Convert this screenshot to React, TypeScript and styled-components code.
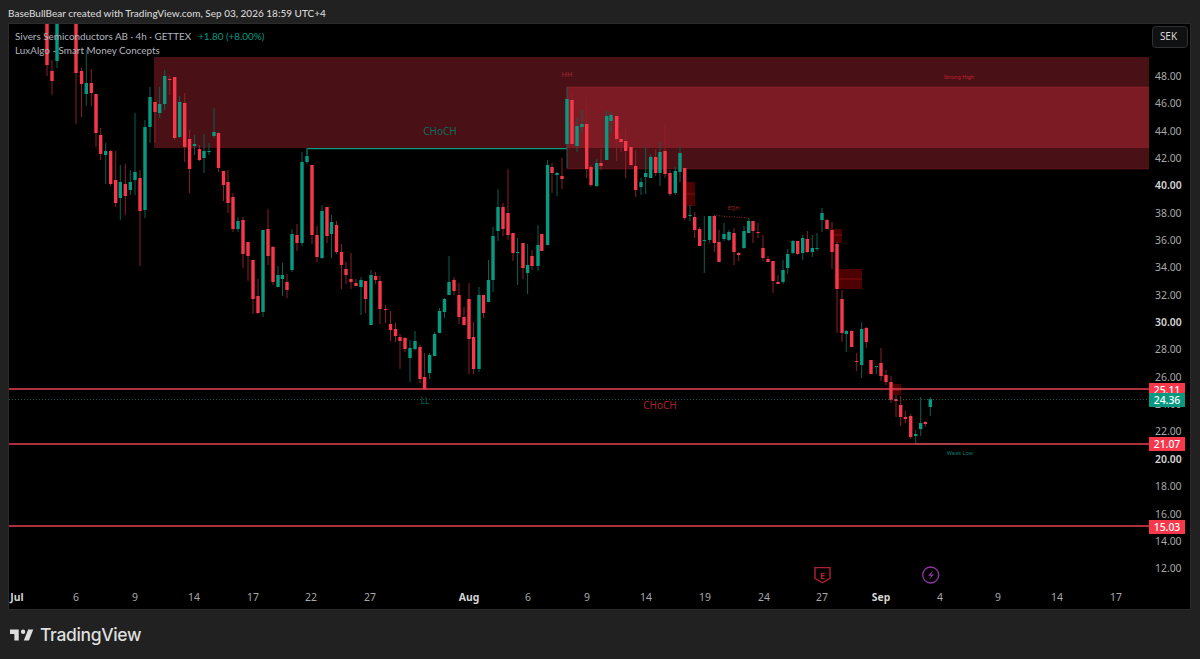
import React from 'react';
import styled, { createGlobalStyle } from 'styled-components';

const Global = createGlobalStyle`
  html, body { margin: 0; padding: 0; background: #212121; }
  #root { width: 1200px; height: 659px; overflow: hidden; }
  * { box-sizing: border-box; }
`;

const FONT = `"Noto Sans", "Liberation Sans", sans-serif`;
const TEXT_FONT = `Lato, "Noto Sans", sans-serif`;
const RED = '#f7374a';
const GREEN = '#089981';
const RED_WICK = '#8c1f2c';
const GREEN_WICK = '#0a5f52';

const Page = styled.div`
  width: 1200px;
  height: 659px;
  display: flex;
  flex-direction: column;
  background: #212121;
  font-family: ${FONT};
`;
const TitleBar = styled.div`
  height: 23px;
  padding: 5px 0 0 8px;
  color: #d6d6d6;
  font-family: ${TEXT_FONT};
  font-size: 10px;
  font-weight: 500;
  line-height: 16px;
  white-space: nowrap;
`;
const Panel = styled.div`
  width: 1183px;
  height: 587px;
  margin-left: 8px;
  background: #000;
  border: 1px solid #2b2b2b;
  display: grid;
  grid-template-columns: 1140px 1fr;
  grid-template-rows: 562px 1fr;
  position: relative;
  overflow: hidden;
`;
const Plot = styled.div`
  position: relative;
  overflow: hidden;
  background: #000;
`;
const ChartSvg = styled.svg`
  display: block;
  width: 1140px;
  height: 562px;
`;
const Legend = styled.div`
  position: absolute;
  left: 6px;
  top: 5px;
  display: flex;
  flex-direction: column;
  font-family: ${TEXT_FONT};
  font-size: 9.9px;
  line-height: 14px;
  color: #b2b5be;
`;
const LegendRow = styled.div`
  display: flex;
  gap: 7px;
  white-space: nowrap;
`;
const Change = styled.span`
  color: #089981;
`;
const PriceAxis = styled.div`
  position: relative;
  display: flex;
  flex-direction: column;
  padding: 2px 0 0 3px;
`;
const CurrencyButton = styled.div`
  width: 36px;
  height: 22px;
  margin-bottom: 15px;
  flex: none;
  border: 1px solid #2f3133;
  border-radius: 4px;
  background: #101112;
  color: #d8d8d8;
  font-size: 10px;
  line-height: 19px;
  text-align: center;
  padding-right: 3px;
`;
const PriceLabel = styled.div<{ $major: boolean }>`
  height: 27.35px;
  flex: none;
  line-height: 27.35px;
  padding-left: 3px;
  font-size: 10.4px;
  color: ${p => (p.$major ? '#d4d4d4' : '#a8a8a8')};
  font-weight: ${p => (p.$major ? 600 : 400)};
`;
const PriceTag = styled.div<{ $top: number; $bg: string; $h: number }>`
  position: absolute;
  left: 0;
  top: ${p => p.$top}px;
  width: 36px;
  height: ${p => p.$h}px;
  background: ${p => p.$bg};
  color: #fff;
  font-size: 10.4px;
  font-weight: 500;
  line-height: ${p => p.$h}px;
  text-align: center;
`;
const TimeAxis = styled.div`
  grid-column: 1 / 3;
  display: flex;
  align-items: center;
  padding-bottom: 1px;
`;
const TimeTick = styled.div<{ $gap: number; $major?: boolean }>`
  flex: none;
  width: 0;
  margin-left: ${p => p.$gap}px;
  display: flex;
  justify-content: center;
  white-space: nowrap;
  font-size: 10.4px;
  color: ${p => (p.$major ? '#d4d4d4' : '#a8a8a8')};
  font-weight: ${p => (p.$major ? 700 : 400)};
`;
const Footer = styled.div`
  flex: 1;
  display: flex;
  align-items: center;
  gap: 6px;
  padding: 0 0 0 10px;
`;
const LogoText = styled.span`
  font-family: Inter, "Noto Sans", sans-serif;
  font-size: 17.5px;
  font-weight: 500;
  letter-spacing: -0.35px;
  color: #dedede;
`;

type C = [number, number, number, number, number, 'r' | 'g'];
const candles: C[] = [
  [47, 10, 10, 65, 76, 'r'], [52, 60, 71, 81, 95, 'r'], [57, 10, 10, 61, 68, 'g'],
  [76, 10, 10, 73, 124, 'r'], [81.6, 68, 71, 84, 117, 'r'], [86.3, 50, 83, 94, 106, 'g'],
  [91.3, 69, 83, 93, 106, 'r'], [96, 94, 94, 133, 147, 'r'], [100.7, 128, 135, 154, 160, 'r'],
  [105.7, 143, 151, 155, 184, 'g'], [110.7, 150, 151, 184, 186, 'r'], [115.7, 151, 180, 203, 207, 'r'],
  [120.3, 165, 182, 198, 220, 'g'], [125.3, 164, 184, 196, 215, 'r'], [130.3, 170, 182, 190, 195, 'g'],
  [135, 113, 172, 180, 195, 'g'], [140, 170, 178, 211, 266, 'r'], [145, 120, 127, 210, 218, 'g'],
  [150, 87, 97, 127, 143, 'g'], [155, 102, 102, 112, 143, 'r'], [159.7, 87, 104, 113, 118, 'g'],
  [164.7, 70, 76, 104, 110, 'g'], [169.7, 76, 79, 80, 95, 'r'], [174.7, 77, 77, 138, 140, 'r'],
  [179.7, 96, 102, 137, 138, 'g'], [184.7, 93, 103, 147, 162, 'r'], [189.6, 130, 139, 169, 193, 'r'],
  [194.5, 135, 144, 146, 155, 'g'], [199.5, 145, 149, 160, 161, 'r'], [204, 134, 151, 158, 173, 'g'],
  [209, 143, 151, 152, 155, 'g'], [214, 108, 132, 136, 138, 'g'], [218.5, 132, 133, 168, 172, 'r'],
  [223.5, 171, 171, 185, 201, 'r'], [228, 170, 182, 203, 213, 'r'], [233, 193, 197, 229, 232, 'r'],
  [238, 217, 221, 229, 232, 'g'], [243, 217, 220, 254, 268, 'r'], [248, 242, 242, 256, 281, 'r'],
  [253, 260, 260, 299, 314, 'r'], [258, 279, 296, 313, 314, 'r'], [263, 230, 230, 312, 317, 'g'],
  [268, 209, 229, 256, 265, 'r'], [273, 246, 247, 282, 285, 'r'], [278, 266, 275, 287, 287, 'g'],
  [282.5, 263, 275, 279, 296, 'g'], [287, 274, 282, 290, 298, 'r'], [292, 229, 234, 270, 272, 'g'],
  [297, 224, 235, 243, 251, 'r'], [302, 152, 162, 243, 246, 'g'], [307, 148, 156, 162, 164, 'g'],
  [312, 165, 165, 235, 244, 'r'], [317, 226, 235, 257, 262, 'r'], [322, 205, 211, 258, 259, 'g'],
  [327, 207, 207, 236, 243, 'r'], [331.5, 215, 222, 234, 258, 'g'], [336.5, 221, 225, 252, 254, 'r'],
  [341.5, 244, 252, 265, 289, 'r'], [346, 262, 269, 275, 284, 'r'], [351, 253, 279, 282, 289, 'r'],
  [356, 279, 283, 286, 286, 'r'], [361, 277, 280, 287, 315, 'g'], [365.6, 281, 281, 299, 313, 'r'],
  [371, 270, 275, 325, 325, 'g'], [375.6, 272, 276, 280, 284, 'r'], [380, 276, 281, 309, 324, 'r'],
  [385.6, 305, 309, 310, 323, 'r'], [390.5, 311, 324, 330, 341, 'r'], [395.5, 323, 329, 336, 342, 'r'],
  [400, 334, 337, 341, 369, 'r'], [405, 337, 338, 349, 352, 'r'], [410, 340, 348, 358, 382, 'g'],
  [415, 331, 341, 349, 350, 'g'], [420, 345, 347, 379, 383, 'r'], [424.6, 353, 377, 389, 390, 'r'],
  [429.6, 353, 355, 373, 379, 'g'], [434.6, 332, 334, 356, 356, 'g'], [439.5, 308, 311, 333, 333, 'g'],
  [444.5, 298, 299, 312, 318, 'g'], [449, 256, 282, 295, 295, 'g'], [454, 277, 280, 291, 295, 'r'],
  [459, 283, 295, 317, 324, 'r'], [464, 307, 317, 325, 325, 'r'], [469, 283, 299, 339, 374, 'r'],
  [473.6, 322, 337, 369, 374, 'r'], [479, 287, 295, 369, 372, 'g'], [483.5, 295, 295, 313, 318, 'r'],
  [488.5, 260, 280, 302, 302, 'g'], [493, 227, 236, 280, 292, 'g'], [498, 189, 207, 231, 241, 'g'],
  [503, 203, 207, 229, 236, 'r'], [508, 169, 213, 235, 240, 'r'], [513, 233, 233, 253, 261, 'r'],
  [517.6, 238, 252, 253, 285, 'g'], [523, 243, 243, 268, 279, 'r'], [527.6, 244, 265, 273, 294, 'g'],
  [532, 250, 256, 266, 270, 'r'], [538, 225, 245, 266, 271, 'g'], [541.8, 234, 234, 251, 251, 'r'],
  [547.6, 160, 165, 245, 245, 'g'], [552, 163, 167, 173, 193, 'r'], [557, 172, 173, 175, 196, 'g'],
  [562, 158, 176, 179, 189, 'r'], [567, 87, 99, 144, 168, 'g'], [572, 92, 100, 144, 144, 'r'],
  [577, 118, 126, 146, 152, 'g'], [582, 110, 124, 127, 133, 'g'], [586.7, 98, 124, 169, 178, 'r'],
  [591, 165, 167, 185, 187, 'r'], [596.7, 159, 163, 186, 187, 'g'], [601, 149, 163, 166, 170, 'r'],
  [606.7, 111, 116, 160, 160, 'g'], [611, 112, 115, 121, 133, 'g'], [616.7, 116, 116, 139, 161, 'r'],
  [621, 133, 139, 142, 152, 'r'], [625.7, 127, 141, 151, 178, 'r'], [631, 147, 147, 165, 166, 'r'],
  [635.7, 150, 166, 190, 197, 'r'], [641, 178, 182, 187, 195, 'g'], [645.7, 147, 173, 177, 194, 'g'],
  [650.7, 154, 157, 178, 178, 'g'], [655.7, 149, 157, 173, 176, 'r'], [660, 142, 152, 173, 186, 'g'],
  [665, 123, 151, 174, 178, 'r'], [670, 170, 173, 194, 196, 'r'], [675.3, 167, 171, 193, 195, 'g'],
  [680, 147, 153, 172, 182, 'g'], [684.7, 168, 168, 218, 220, 'r'], [690, 205, 215, 216, 221, 'g'],
  [694.7, 212, 217, 230, 238, 'r'], [699.7, 227, 229, 246, 246, 'r'], [704.3, 216, 240, 241, 273, 'g'],
  [709.7, 216, 216, 240, 243, 'g'], [714.3, 216, 216, 243, 252, 'r'], [719, 230, 242, 262, 262, 'r'],
  [724, 223, 234, 239, 241, 'g'], [729, 230, 232, 240, 241, 'g'], [734, 228, 233, 252, 265, 'r'],
  [738.7, 252, 253, 255, 261, 'r'], [744, 226, 231, 248, 249, 'g'], [748.7, 218, 221, 233, 233, 'g'],
  [753, 221, 221, 231, 243, 'r'], [758, 223, 232, 233, 238, 'r'], [763, 235, 248, 258, 261, 'r'],
  [768, 256, 259, 262, 262, 'r'], [773, 261, 261, 281, 293, 'r'], [778, 275, 282, 284, 284, 'r'],
  [783, 260, 270, 282, 284, 'g'], [787.7, 249, 254, 268, 274, 'g'], [793, 240, 241, 253, 254, 'g'],
  [797.7, 241, 241, 254, 255, 'r'], [802.7, 235, 238, 253, 260, 'g'], [807.3, 231, 239, 252, 253, 'r'],
  [812.3, 235, 248, 252, 257, 'g'], [817, 233, 248, 249, 251, 'g'], [822, 208, 213, 220, 232, 'g'],
  [827, 219, 220, 229, 229, 'r'], [832, 222, 230, 252, 269, 'r'], [837, 242, 244, 289, 333, 'r'],
  [842, 290, 299, 333, 342, 'r'], [846.3, 330, 331, 334, 352, 'g'], [851.7, 330, 331, 347, 347, 'r'],
  [856.7, 353, 361, 362, 371, 'r'], [861.7, 322, 329, 365, 378, 'g'], [866.3, 327, 328, 342, 348, 'r'],
  [871, 360, 360, 374, 374, 'r'], [876.3, 366, 366, 367, 374, 'g'], [881, 348, 363, 376, 381, 'r'],
  [886, 370, 375, 382, 385, 'r'], [891, 376, 382, 400, 403, 'r'], [896, 395, 399, 401, 417, 'r'],
  [900.7, 396, 405, 417, 426, 'r'], [905.3, 411, 417, 419, 423, 'r'], [910.7, 414, 416, 437, 439, 'r'],
  [915.7, 430, 434, 436, 444, 'g'], [920.7, 397, 423, 429, 436, 'g'], [925.3, 421, 422, 424, 427, 'r'],
  [930.3, 397, 399, 407, 416, 'g'],
];

const prices = [48, 46, 44, 42, 40, 38, 36, 34, 32, 30, 28, 26, 24, 22, 20, 18, 16, 14, 12];
const ticks: { t: string; gap: number; major?: boolean }[] = [
  { t: 'Jul', gap: 8, major: true }, { t: '6', gap: 59 }, { t: '9', gap: 59 }, { t: '14', gap: 59 },
  { t: '17', gap: 59 }, { t: '22', gap: 58 }, { t: '27', gap: 59 }, { t: 'Aug', gap: 99, major: true },
  { t: '6', gap: 59 }, { t: '9', gap: 59 }, { t: '14', gap: 59 }, { t: '19', gap: 59 }, { t: '24', gap: 59 },
  { t: '27', gap: 58 }, { t: 'Sep', gap: 59, major: true }, { t: '4', gap: 59 }, { t: '9', gap: 58 },
  { t: '14', gap: 59 }, { t: '17', gap: 59 },
];

const Candle: React.FC<{ c: C }> = ({ c }) => {
  const [x, wt, bt, bb, wb, d] = c;
  return (
    <g>
      <line x1={x} x2={x} y1={wt} y2={wb} stroke={d === 'r' ? RED_WICK : GREEN_WICK} strokeWidth={1} />
      <rect x={x - 1.7} y={bt} width={3.4} height={Math.max(1, bb - bt)} fill={d === 'r' ? RED : GREEN} />
    </g>
  );
};

const OB: React.FC<{ x: number; y: number; w: number; h: number; mid: number }> = ({ x, y, w, h, mid }) => (
  <g>
    <rect x={x} y={y} width={w} height={h} fill="rgba(140,0,0,.55)" />
    <line x1={x} x2={x + w} y1={mid} y2={mid} stroke="rgba(200,30,30,.45)" strokeWidth={1} />
  </g>
);

const hLines = [389, 444, 526];

const Chart = () => (
  <ChartSvg viewBox="9 24 1140 562">
    <rect x={154.5} y={57.5} width={994} height={90} fill="rgba(242,54,69,.3)" stroke="rgba(242,54,69,.18)" />
    <rect x={567} y={87} width={581.5} height={82} fill="rgba(242,54,69,.3)" stroke="rgba(242,54,69,.2)" />
    <line x1={307} x2={567} y1={148.6} y2={148.6} stroke="#0a9a82" strokeWidth={1.4} />
    <line x1={307} x2={307} y1={148} y2={155} stroke="#0a8f79" strokeWidth={1} />
    <OB x={686.5} y={182} w={8.5} h={24} mid={194} />
    <OB x={833} y={229} w={9} h={14} mid={235} />
    <OB x={835} y={269} w={27} h={20} mid={279} />
    <OB x={893} y={384} w={8} h={11} mid={390} />
    {candles.map((c, i) => <Candle key={i} c={c} />)}
    <line x1={714} x2={749} y1={215.5} y2={218} stroke="#9c2431" strokeWidth={1} strokeDasharray="1 1.5" />
    <line x1={916} x2={960} y1={443.8} y2={443.8} stroke="#0a6f5f" strokeWidth={1} />
    <line x1={9} x2={1149} y1={399.5} y2={399.5} stroke="#0d5f52" strokeWidth={1} strokeDasharray="1 2" />
    {hLines.map(y => <line key={y} x1={9} x2={1149} y1={y} y2={y} stroke="#e6404f" strokeWidth={1.4} />)}
    <text x={440} y={135} textAnchor="middle" fontFamily={FONT} fontSize={10} fill="#0c6c5c">CHoCH</text>
    <text x={660} y={409} textAnchor="middle" fontFamily={FONT} fontSize={10} fill="#a8202f">CHoCH</text>
    <text x={567} y={77} textAnchor="middle" fontFamily={FONT} fontSize={7.4} fill="#a02a3a">HH</text>
    <text x={959} y={79} textAnchor="middle" fontFamily={FONT} fontSize={5.4} fill="#c42234">Strong High</text>
    <text x={733.5} y={210} textAnchor="middle" fontFamily={FONT} fontSize={5.6} fill="#a8202f">EQH</text>
    <text x={425} y={404} textAnchor="middle" fontFamily={FONT} fontSize={8} fill="#0c6c5c">LL</text>
    <text x={960} y={455} textAnchor="middle" fontFamily={FONT} fontSize={5.6} fill="#0c7c69">Weak Low</text>
    <path d="M815 567.6h15v10.8l-7.5 4.4-7.5-4.4z" fill="none" stroke="#b2202f" strokeWidth={1.4} />
    <text x={822.5} y={578.6} textAnchor="middle" fontFamily={FONT} fontSize={9.5} fontWeight={700} fill="#b2202f">E</text>
    <circle cx={930.7} cy={575} r={8} fill="none" stroke="#9436aa" strokeWidth={1.3} />
    <path d="M933 570.6l-5 5.2h3.2l-2 3.8 4.8-5.2h-3z" fill="#9436aa" />
  </ChartSvg>
);

const TvLogo = () => (
  <svg width="24" height="16" viewBox="2 5 33 17" aria-hidden="true">
    <path fill="#dedede" d="M14 6H2v6h6v9h6V6zm14 15h-7l6-15h7l-6 15zm-8-9a3 3 0 1 0 0-6 3 3 0 0 0 0 6z" />
  </svg>
);

export default function App() {
  return (
    <Page>
      <Global />
      <TitleBar>BaseBullBear created with TradingView.com, Sep 03, 2026 18:59 UTC+4</TitleBar>
      <Panel>
        <Plot>
          <Chart />
          <Legend>
            <LegendRow>
              <span>Sivers Semiconductors AB · 4h · GETTEX</span>
              <Change>+1.80 (+8.00%)</Change>
            </LegendRow>
            <LegendRow>LuxAlgo - Smart Money Concepts</LegendRow>
          </Legend>
        </Plot>
        <PriceAxis>
          <CurrencyButton>SEK</CurrencyButton>
          {prices.map(p => (
            <PriceLabel key={p} $major={p % 10 === 0}>{p.toFixed(2)}</PriceLabel>
          ))}
          <PriceTag $top={359} $bg="#f7374a" $h={14}>25.11</PriceTag>
          <PriceTag $top={369} $bg="#089981" $h={14}>24.36</PriceTag>
          <PriceTag $top={413} $bg="#f7374a" $h={14}>21.07</PriceTag>
          <PriceTag $top={496} $bg="#f7374a" $h={14}>15.03</PriceTag>
        </PriceAxis>
        <TimeAxis>
          {ticks.map((k, i) => (
            <TimeTick key={i} $gap={k.gap} $major={k.major}>{k.t}</TimeTick>
          ))}
        </TimeAxis>
      </Panel>
      <Footer>
        <TvLogo />
        <LogoText>TradingView</LogoText>
      </Footer>
    </Page>
  );
}
